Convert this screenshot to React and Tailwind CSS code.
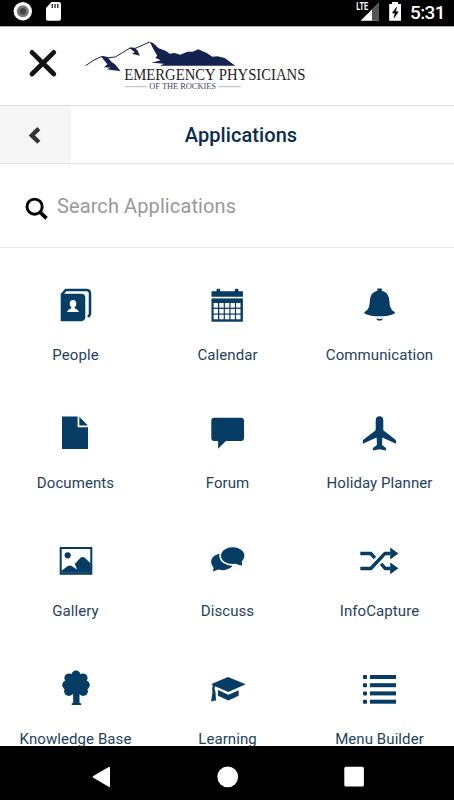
const PeopleIcon = () => (
  <>
    <path d="M4.7 11.5 Q4.7 8.7 7.5 8.7 H25.3 Q29.3 8.7 29.3 12.7 V33 Q28.8 35.8 26 36.3 H4.7z" />
    <path d="M5.2 10.2 L9.8 4.9 H30.2 Q34 4.9 34 8.6 V29.2 L32.2 32" fill="none" stroke="currentColor" strokeWidth="2.5" />
    <path
      d="M17 15 c-2.3 0-3.3 1.6-3.3 3.5 0 1.7.6 2.8 1.5 3.7 v1.2 c-1.8.8-3.8 1.2-4.1 3.7 h11.8 c-.3-2.5-2.3-2.9-4.1-3.7 v-1.2 c.9-.9 1.5-2 1.5-3.7 0-1.9-1-3.5-3.3-3.5z"
      fill="#fff"
    />
  </>
)

const CalendarIcon = () => (
  <>
    <path d="M3.5 6.3 H8.5 V4.7 q0-1 1-1 h1.7 q1 0 1 1 V6.3 H26.8 V4.7 q0-1 1-1 h1.6 q1 0 1 1 V6.3 H34.9 V11.8 H3.5z" />
    <rect x="3.5" y="13.4" width="31.4" height="23.3" />
    {[18, 23.9, 29.7].map((y) =>
      [5.6, 11.3, 16.9, 22.5, 28.1].map((x) => (
        <rect key={`${x}-${y}`} x={x} y={y} width="4.4" height="4.6" fill="#fff" />
      ))
    )}
  </>
)

const BellIcon = () => (
  <>
    <path d="M17.4 3.6 h4.4 v2.2 c5.4 1.4 7.2 5 7.6 10.6 .4 5.8 1.4 8.2 5.4 10.6 v1.5 C31 30.6 25.5 31.3 19.6 31.3 S8.2 30.6 4.4 28.5 v-1.5 C8.4 24.6 9.4 22.2 9.8 16.4 c.4-5.6 2.2-9.2 7.6-10.6z" />
    <path d="M16 33.6 q3.6.6 7.2 0 q-1.2 2.2-3.6 2.2 t-3.6-2.2z" />
  </>
)

const DocumentIcon = () => (
  <>
    <path d="M6 3.4 H21.6 V14.3 H32 V36 H6z" />
    <path d="M23.3 3.8 L31.9 12.6 H23.3z" />
  </>
)

const ForumIcon = () => (
  <path d="M6.3 4.7 H33 Q36 4.7 36 7.7 V25 Q36 28 33 28 H18 L10.1 35.7 V28 H6.3 Q3.3 28 3.3 25 V7.7 Q3.3 4.7 6.3 4.7z" />
)

const PlaneIcon = () => (
  <path
    transform="translate(-.5 0)"
    d="M20 3.3 c2.4 0 3.8 1.6 3.8 4 V17.3 L35.7 26.6 q.8.7.8 2 v2.2 L22.9 24.6 L22.5 32 l3.4 2.5 q.7.6.7 1.4 v1.6 L20 36.3 l-6.7 1.2 v-1.6 q0-.8.7-1.4 l3.5-2.5 L17.1 24.6 L3.3 30.8 v-2.2 q0-1.3.8-2 L16.2 17.3 V7.3 c0-2.4 1.4-4 3.8-4z"
  />
)

const GalleryIcon = () => (
  <>
    <path d="M3.7 6 H36.3 V33.7 H3.7z M5.7 8 V31.5 H34.3 V8z" fillRule="evenodd" />
    <circle cx="11.7" cy="14.3" r="3.1" />
    <path d="M5.5 31.7 V29.8 L11.5 25.2 Q14 23.6 16 25.2 L21.2 28.6 L18.8 23 L24.2 17 Q26.3 15 28.5 16.6 L34.8 22.5 V31.7z" />
  </>
)

const DiscussIcon = () => (
  <g transform="translate(-.5 0)">
    <ellipse cx="15" cy="20.8" rx="11.4" ry="8.4" />
    <path d="M5 24 Q7 27 5.5 30.4 Q9.5 29.7 12.5 27z" />
    <ellipse cx="25.2" cy="14.7" rx="11.5" ry="8.3" stroke="#fff" strokeWidth="3.8" />
    <ellipse cx="25.2" cy="14.7" rx="11.7" ry="8.4" />
    <path d="M27 22 Q30.5 24.2 34.7 24.6 Q33.5 21.5 35 18z" />
  </g>
)

const ShuffleIcon = () => (
  <g transform="translate(-.5 0)">
    <g fill="none" stroke="currentColor" strokeWidth="3.5">
      <path d="M.8 27.4 H11.4 L25.5 12.4 H31" />
      <path d="M.8 12.4 H11.2 L15.4 17" />
      <path d="M21.6 22.9 L25.8 27.4 H31" />
    </g>
    <path d="M30.7 6.6 L38.9 12.5 L30.7 18.4z M30.7 21.4 L38.9 27.3 L30.7 33.2z" />
  </g>
)

const TreeIcon = () => (
  <>
    <circle cx="20" cy="6.3" r="4.7" />
    <circle cx="13" cy="9" r="4.6" />
    <circle cx="27" cy="9" r="4.6" />
    <circle cx="10.7" cy="16" r="4.5" />
    <circle cx="29.3" cy="16" r="4.5" />
    <circle cx="12.8" cy="22.3" r="4.7" />
    <circle cx="27.2" cy="22.3" r="4.7" />
    <circle cx="20" cy="16" r="10" />
    <path d="M17 22 h6.5 V33.8 L25.2 34.6 V36 H15.7 V34.6 L17.2 33.8z" />
  </>
)

const CapIcon = () => (
  <g transform="translate(-.5 0)">
    <path d="M20.5 8 L38.2 15.3 L20.8 23 L7.5 17.2 L7 19.5 L8 23 L8.5 32 L6.6 31.3 L5.5 32.6 L3.7 32 L5 23 L4.6 19.5 L5.3 16.5 L4 15z" />
    <path d="M10.5 21 L20.8 25.7 L31.2 21.2 V26.7 L20.8 31.4 L10.5 26.7z" />
  </g>
)

const MenuIcon = () => (
  <>
    {[6, 14.2, 22.4, 30.7].map((y) => (
      <g key={y}>
        <rect x="3" y={y} width="4" height="4" rx=".8" />
        <rect x="10" y={y} width="26" height="4" />
      </g>
    ))}
  </>
)

const apps = [
  { label: 'People', Icon: PeopleIcon },
  { label: 'Calendar', Icon: CalendarIcon },
  { label: 'Communication', Icon: BellIcon },
  { label: 'Documents', Icon: DocumentIcon },
  { label: 'Forum', Icon: ForumIcon },
  { label: 'Holiday Planner', Icon: PlaneIcon },
  { label: 'Gallery', Icon: GalleryIcon },
  { label: 'Discuss', Icon: DiscussIcon },
  { label: 'InfoCapture', Icon: ShuffleIcon },
  { label: 'Knowledge Base', Icon: TreeIcon },
  { label: 'Learning', Icon: CapIcon },
  { label: 'Menu Builder', Icon: MenuIcon },
]

const Logo = () => (
  <svg className="w-[230px] h-[60px]" viewBox="252 40 690 180">
    <g fill="#14224f">
      {/* right range */}
      <path d="M449 48 L459 52 L476 68 L498 76 L509 84 L524 82 L541 87 L562 78 L578 78 L595 71 L620 82 L637 93 L652 92 L674 97 L706 120 L480 120 L492 114 L455 111 L482 104 L466 96 L472 90 L462 74z" />
      {/* left and middle peaks */}
      <path d="M304 93 L322 94 L335 109 L345 116 L362 137 L320 131 L332 126 L312 125 L322 116z" />
      <path d="M388 66 L404 67 L412 74 L420 90 L396 84 L404 80z" />
    </g>
    <path
      d="M257 120 L282 103 L306 92 L324 96 L346 94 L390 67 L406 68 L449 49"
      fill="none"
      stroke="#14224f"
      strokeWidth="3"
      strokeLinejoin="round"
    />
    <text x="373" y="164" textLength="543" lengthAdjust="spacingAndGlyphs" fontSize="48" fill="#222" fontFamily="Liberation Serif, serif">
      EMERGENCY PHYSICIANS
    </text>
    <text x="448" y="191.5" textLength="200" lengthAdjust="spacingAndGlyphs" fontSize="26" fill="#3a4668" fontFamily="Liberation Serif, serif">
      OF THE ROCKIES
    </text>
    <path d="M374 183 H440 M655 183 H722" stroke="#aaa" strokeWidth="2.5" />
  </svg>
)

const StatusBar = () => (
  <div className="h-[26px] shrink-0 bg-black flex items-start justify-between">
    <svg className="w-[70px] h-[26px]" viewBox="0 0 70 26">
      <circle cx="22.8" cy="11.3" r="9.2" fill="#fff" />
      <circle cx="22.8" cy="11.3" r="6" fill="#777" />
      <circle cx="22.8" cy="11.3" r="3.2" fill="#444" />
      <path d="M51.5 2 H59 q2 0 2 2 V18.8 q0 2-2 2 H48 q-2 0-2-2 V8z" fill="#fff" />
      <path d="M52.3 4 V8 M55 4 V8 M57.8 4 V8" stroke="#222" strokeWidth="1.3" />
    </svg>
    <div className="flex">
      <svg className="w-[55px] h-[26px]" viewBox="354 0 55 26">
        <path d="M360.5 20.7 L379 2.5 V20.7z" fill="#fff" />
        <path d="M372 9.3 L379 2.5 V20.7 H372z" fill="#555" />
        <path d="M354 0 H369 V12.5 H354z" fill="#000" />
        <text x="356.3" y="10" textLength="12" lengthAdjust="spacingAndGlyphs" fontSize="10.5" fontWeight="700" fill="#fff" fontFamily="Roboto, sans-serif">
          LTE
        </text>
        <path d="M389.2 4 H392 V2 H398 V4 H401 V20.8 H389.2z" fill="#fff" />
        <path d="M396.7 7 L392.3 13 H395 L394 18 L398.3 11.7 H395.6z" fill="#000" stroke="#000" strokeWidth=".5" />
      </svg>
      <span className="w-[45px] pl-px text-[19px] leading-[25px] tracking-[-0.6px] font-medium text-white">5:31</span>
    </div>
  </div>
)

const BottomNav = () => (
  <div className="h-[54.5px] shrink-0 bg-black">
    <svg className="w-full h-full" viewBox="0 745.5 454 54.5" fill="#fff">
      <path d="M93.3 775.4 L108.7 766.6 Q110 766 110 767.4 V785.6 Q110 787 108.7 786.3 L93.3 777.2 Q92 776.3 93.3 775.4z" />
      <circle cx="227.7" cy="776.3" r="10.4" />
      <rect x="344.3" y="766.3" width="19.6" height="19.7" rx="1.5" />
    </svg>
  </div>
)

export default function App() {
  return (
    <div className="w-[454px] h-[800px] flex flex-col overflow-hidden bg-white font-[Roboto,sans-serif]">
      <StatusBar />

      <header className="h-20 shrink-0 flex items-start border-t border-b border-t-[#a8a8a8] border-b-[#dedede]">
        <button className="ml-[28px] mt-[21px] mr-[26px]">
          <svg className="w-[30px] h-[32px]" viewBox="28 48 30 32">
            <path d="M32 52.3 L53.8 74 M53.8 52.3 L32 74" stroke="#141414" strokeWidth="4.7" strokeLinecap="round" />
          </svg>
        </button>
        <div className="pt-[12px]">
          <Logo />
        </div>
      </header>

      <div className="h-[58px] shrink-0 flex border-b border-[#e2e2e2]">
        <button className="w-[71px] bg-[#f6f6f6]">
          <svg className="w-[71px] h-[57px]" viewBox="0 106 71 57">
            <path d="M38.8 128.6 L31.8 135.4 L38.8 142.2" fill="none" stroke="#333" strokeWidth="4.3" />
          </svg>
        </button>
        <h1 className="flex-1 pr-[43px] text-center text-xl leading-[59px] tracking-[0.08px] font-medium text-[#0a2c50]">
          <span>Applications</span>
        </h1>
      </div>

      <label className="h-[84px] shrink-0 flex border-b border-[#e6e6e6]">
        <svg className="w-[57px] h-[83px]" viewBox="0 164 57 83">
          <circle cx="34.6" cy="206.7" r="7.6" fill="none" stroke="#000" strokeWidth="2.9" />
          <path d="M40 212.2 L46.5 218.3" stroke="#000" strokeWidth="3.7" />
        </svg>
        <input
          className="flex-1 text-xl tracking-[0.1px] text-[#999] placeholder:text-[#999] outline-none"
          placeholder="Search Applications"
        />
      </label>

      <main className="flex-1 min-h-0 overflow-hidden">
        <div className="w-[456px] pt-[37px] grid grid-cols-3 auto-rows-[128px]">
          {apps.map(({ label, Icon }) => (
            <div key={label} className="flex flex-col items-center">
              <svg className="w-10 h-10 shrink-0 text-[#073d64]" viewBox="0 0 40 40" fill="currentColor">
                <Icon />
              </svg>
              <span className="mt-5 mr-px text-[15px] leading-5 tracking-[0.08px] whitespace-nowrap text-[#1c4263]">{label}</span>
            </div>
          ))}
        </div>
      </main>

      <BottomNav />
    </div>
  )
}
